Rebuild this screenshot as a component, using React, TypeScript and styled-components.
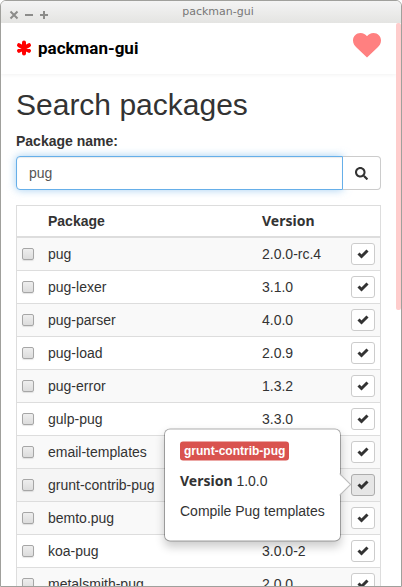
import React from "react";
import styled, { createGlobalStyle, css } from "styled-components";
import { FaSearch } from "react-icons/fa";

const GlobalStyle = createGlobalStyle`
  * { box-sizing: border-box; }
  html, body { margin: 0; background: #fff; }
  body {
    font-family: "Liberation Sans", Arial, sans-serif;
    font-size: 14px;
    line-height: 20px;
    color: #333;
  }
  button, input { font: inherit; color: inherit; }
`;

const Frame = styled.div`
  display: flex;
  flex-direction: column;
  height: 100vh;
  overflow: hidden;
  border: 1px solid #a0a09c;
  border-radius: 6px 6px 0 0;
  background: #fff;
`;

const TitleBar = styled.div`
  display: grid;
  grid-template-columns: 1fr auto 1fr;
  flex: none;
  height: 22px;
  padding: 0 8px;
  background: linear-gradient(#f4f4f4, #e4e4e2);
  color: #777;
`;

const WindowControls = styled.div`
  display: flex;
  align-items: center;
  gap: 5px;
  padding-top: 5px;
`;

const WindowButton = styled.button`
  display: flex;
  padding: 0;
  border: 0;
  background: none;
  color: #8c8c8a;
`;

const WindowTitle = styled.div`
  padding-left: 34px;
  font: 11px/21px "DejaVu Sans", sans-serif;
`;

const Body = styled.div`
  display: flex;
  flex: 1;
  min-height: 0;
`;

const Page = styled.div`
  flex: 1;
  min-width: 0;
  overflow: hidden;
`;

const ScrollTrack = styled.div`
  flex: none;
  width: 5px;
`;

const ScrollThumb = styled.div`
  height: 51%;
  border-radius: 2px;
  background: #ffcccc;
`;

const Header = styled.header`
  display: flex;
  align-items: center;
  justify-content: space-between;
  height: 51px;
  padding: 0 15px;
  box-shadow: 0 0 5px rgba(0, 0, 0, 0.08);
`;

const Brand = styled.a`
  display: flex;
  align-items: center;
  gap: 6px;
  padding-bottom: 2px;
  color: #000;
  font: bold 17px/20px Roboto, sans-serif;
  text-decoration: none;
  svg { color: #f00; }
`;

const HeartButton = styled.button`
  display: flex;
  margin-bottom: 7px;
  padding: 0;
  border: 0;
  background: none;
  color: #ff8080;
`;

const Main = styled.main`
  padding: 14px 15px;
`;

const Title = styled.h2`
  margin: 0 0 10px;
  font-size: 30px;
  font-weight: 400;
  line-height: 33px;
`;

const Label = styled.label`
  display: block;
  margin-bottom: 5px;
  font-weight: 700;
`;

const SearchForm = styled.form`
  display: flex;
  margin-bottom: 15px;
`;

const SearchInput = styled.input`
  flex: 1;
  min-width: 0;
  height: 34px;
  padding: 6px 12px;
  border: 1px solid #66afe9;
  border-radius: 4px 0 0 4px;
  outline: 0;
  box-shadow: inset 0 1px 1px rgba(0, 0, 0, 0.08), 0 0 8px rgba(102, 175, 233, 0.6);
  color: #555;
`;

const SearchButton = styled.button`
  display: flex;
  align-items: center;
  justify-content: center;
  width: 38px;
  border: 1px solid #ccc;
  border-left: 0;
  border-radius: 0 4px 4px 0;
  background: #fff;
`;

const Table = styled.table`
  width: 100%;
  table-layout: fixed;
  border: 1px solid #ddd;
  border-spacing: 0;
`;

const HeadCell = styled.th<{ $width?: number }>`
  height: 32px;
  padding: 0 5px;
  border-bottom: 2px solid #ddd;
  text-align: left;
  ${(p) => p.$width && css`width: ${p.$width}px;`}
`;

const Row = styled.tr<{ $active: boolean }>`
  &:nth-child(odd) { background: #f9f9f9; }
  ${(p) => p.$active && css`background: #f5f5f5;`}
`;

const Cell = styled.td`
  height: 33px;
  padding: 0 5px 1px;
  border-bottom: 1px solid #ddd;
  white-space: nowrap;
`;

const Checkbox = styled.input`
  display: block;
  appearance: none;
  width: 12px;
  height: 12px;
  margin: 0;
  border: 1px solid #a6a6a6;
  border-radius: 2px;
  background: linear-gradient(#eee, #dcdcdc);
  box-shadow: 0 1px 1px rgba(0, 0, 0, 0.1);
`;

const Anchor = styled.div`
  position: relative;
`;

const PickButton = styled.button<{ $active: boolean }>`
  display: flex;
  align-items: center;
  justify-content: center;
  width: 24px;
  height: 22px;
  padding: 0;
  border: 1px solid ${(p) => (p.$active ? "#adadad" : "#ccc")};
  border-radius: 3px;
  background: ${(p) => (p.$active ? "#e6e6e6" : "#fff")};
`;

const Popover = styled.div`
  position: absolute;
  z-index: 1;
  top: 50%;
  right: 34px;
  width: 177px;
  padding: 10px 15px;
  transform: translateY(-50%);
  border: 1px solid rgba(0, 0, 0, 0.3);
  border-radius: 6px;
  background: #fff;
  background-clip: padding-box;
  box-shadow: 0 5px 10px rgba(0, 0, 0, 0.2);
  white-space: nowrap;

  &::after {
    content: "";
    position: absolute;
    top: 50%;
    left: 100%;
    width: 15px;
    height: 15px;
    border: solid #bbb;
    border-width: 1px 1px 0 0;
    background: linear-gradient(45deg, transparent 50%, #fff 50%);
    transform: translate(-50%, -50%) rotate(45deg);
  }
`;

const PopoverLine = styled.p`
  margin: 0 0 10px;
`;

const Badge = styled.span`
  display: inline-block;
  padding: 0 4px;
  border-radius: 3px;
  background: #d9534f;
  color: #fff;
  font-size: 12px;
  font-weight: 700;
  line-height: 19px;
`;

const BoldVersion = styled.strong`
  font: bold 14px/20px "Noto Sans", sans-serif;
`;

const packages = [
  { name: "pug", version: "2.0.0-rc.4" },
  { name: "pug-lexer", version: "3.1.0" },
  { name: "pug-parser", version: "4.0.0" },
  { name: "pug-load", version: "2.0.9" },
  { name: "pug-error", version: "1.3.2" },
  { name: "gulp-pug", version: "3.3.0" },
  { name: "email-templates", version: "2.7.1" },
  { name: "grunt-contrib-pug", version: "1.0.0", description: "Compile Pug templates" },
  { name: "bemto.pug", version: "2.0.1" },
  { name: "koa-pug", version: "3.0.0-2" },
  { name: "metalsmith-pug", version: "2.0.0" },
];

const controls = [
  { label: "Close", path: "M1.5 1.5L8.5 8.5M8.5 1.5L1.5 8.5" },
  { label: "Minimize", path: "M1 5H9" },
  { label: "Maximize", path: "M1 5H9M5 1V9" },
];

export default function App() {
  return (
    <Frame>
      <GlobalStyle />
      <TitleBar>
        <WindowControls>
          {controls.map((c) => (
            <WindowButton key={c.label} type="button" aria-label={c.label}>
              <svg width="10" height="10" viewBox="0 0 10 10" fill="none" stroke="currentColor" strokeWidth="2">
                <path d={c.path} />
              </svg>
            </WindowButton>
          ))}
        </WindowControls>
        <WindowTitle>packman-gui</WindowTitle>
      </TitleBar>
      <Body>
        <Page>
          <Header>
            <Brand href="#">
              <svg width="16" height="16" viewBox="0 0 16 16" stroke="currentColor" strokeWidth="4" strokeLinecap="round">
                <path d="M8 2.500V13.500M3 5.200L13 10.800M13 5.200L3 10.800" />
              </svg>
              packman-gui
            </Brand>
            <HeartButton type="button" aria-label="Favourite">
              <svg width="28" height="25" viewBox="0 0 28 25" fill="currentColor">
                <path d="M14 24.500L3.500 14.500C1.500 12.500 0 10.500 0 7.500C0 3.200 3.200 0 7.500 0C10.200 0 12.700 1.300 14 3.300C15.300 1.300 17.800 0 20.500 0C24.800 0 28 3.200 28 7.500C28 10.500 26.500 12.500 24.500 14.500Z" />
              </svg>
            </HeartButton>
          </Header>
          <Main>
            <Title>Search packages</Title>
            <Label htmlFor="package-name">Package name:</Label>
            <SearchForm onSubmit={(e) => e.preventDefault()}>
              <SearchInput id="package-name" defaultValue="pug" />
              <SearchButton type="submit" aria-label="Search">
                <FaSearch size={13} />
              </SearchButton>
            </SearchForm>
            <Table>
              <thead>
                <tr>
                  <HeadCell $width={26} />
                  <HeadCell>Package</HeadCell>
                  <HeadCell $width={89}><BoldVersion>Version</BoldVersion></HeadCell>
                  <HeadCell $width={34} />
                </tr>
              </thead>
              <tbody>
                {packages.map((p) => (
                  <Row key={p.name} $active={!!p.description}>
                    <Cell><Checkbox type="checkbox" aria-label={`Select ${p.name}`} /></Cell>
                    <Cell>{p.name}</Cell>
                    <Cell>{p.version}</Cell>
                    <Cell>
                      <Anchor>
                        <PickButton type="button" $active={!!p.description} aria-label={`Details of ${p.name}`}>
                          <svg width="12" height="10" viewBox="0 0 12 10" fill="none" stroke="currentColor" strokeWidth="3">
                            <path d="M1.500 4.500L4.500 7.500L10.500 1.500" />
                          </svg>
                        </PickButton>
                        {p.description && (
                          <Popover role="tooltip">
                            <PopoverLine><Badge>{p.name}</Badge></PopoverLine>
                            <PopoverLine><BoldVersion>Version</BoldVersion> {p.version}</PopoverLine>
                            <PopoverLine>{p.description}</PopoverLine>
                          </Popover>
                        )}
                      </Anchor>
                    </Cell>
                  </Row>
                ))}
              </tbody>
            </Table>
          </Main>
        </Page>
        <ScrollTrack><ScrollThumb /></ScrollTrack>
      </Body>
    </Frame>
  );
}
